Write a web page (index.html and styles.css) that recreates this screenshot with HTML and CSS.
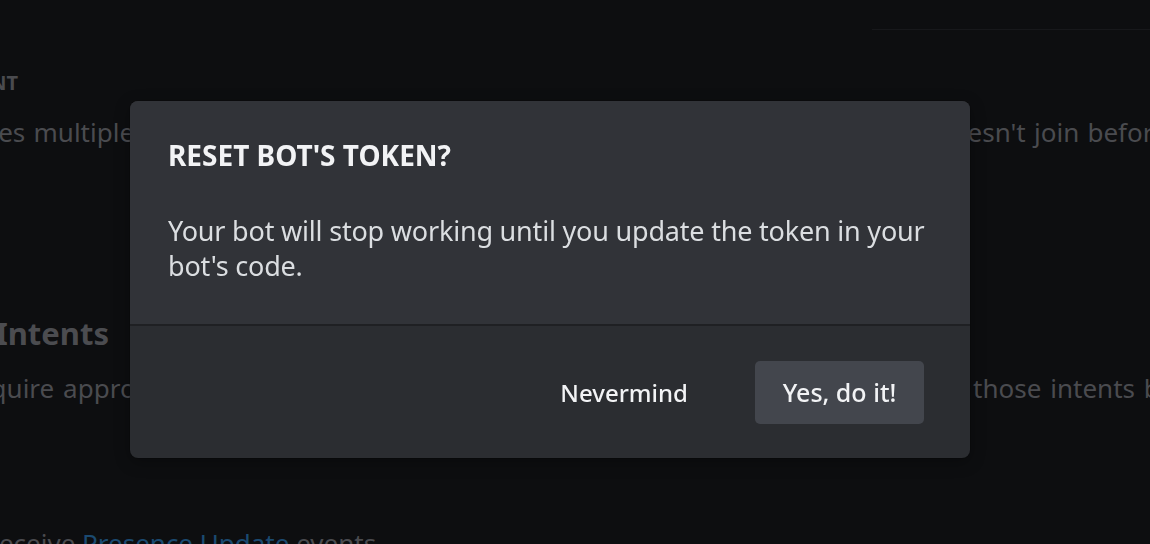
FILE: index.html
```html
<!DOCTYPE html>
<html lang="en">
<head>
<meta charset="utf-8">
<title>Reset Bot's Token</title>
<link rel="stylesheet" href="styles.css">
</head>
<body>
<div class="page">
  <div class="topline"></div>
  <div class="content">
    <div class="anchor label-row"><span class="label">REQUIRES OAUTH2 CODE GRANT</span></div>
    <p class="desc one">If your application requires multiple scopes then you may need the full OAuth2 flow to ensure a bot doesn't join before your application is granted a token.</p>
    <div class="anchor heading-row"><h2 class="heading">Privileged Gateway Intents</h2></div>
    <p class="desc two">Some Gateway Intents require approval if your bot is verified. If your bot is not verified, you can toggle those intents below to access them.</p>
    <p class="desc three">Required for your bot to receive <a class="link">Presence Update</a> events.</p>
  </div>
</div>

<div class="overlay">
  <div class="modal">
    <div class="modal-body">
      <h1 class="modal-title">RESET BOT'S TOKEN?</h1>
      <p class="modal-text">Your bot will stop working until you update the token in your bot's code.</p>
    </div>
    <div class="modal-footer">
      <button class="btn btn-link">Nevermind</button>
      <button class="btn btn-primary">Yes, do it!</button>
    </div>
  </div>
</div>
</body>
</html>
```

FILE: styles.css
```css
* { box-sizing: border-box; }
html, body {
  margin: 0;
  padding: 0;
  width: 1150px;
  height: 544px;
  overflow: hidden;
  background: #0d0e10;
  font-family: "Noto Sans", "Open Sans", sans-serif;
}
.page {
  height: 544px;
  overflow: hidden;
}
.topline {
  height: 1px;
  margin: 29px 0 0 872px;
  background: #17181b;
}
.content {
  display: flex;
  flex-direction: column;
  align-items: flex-start;
  color: #4a4b4f;
}
/* rows whose visible text ends at a fixed point: content overflows to the left */
.anchor {
  display: flex;
  justify-content: flex-end;
  flex-shrink: 0;
}
.anchor > * { flex-shrink: 0; white-space: nowrap; }
.label-row {
  width: 18px;
  margin-top: 41px;
}
.label {
  font-size: 20px;
  font-weight: 700;
  line-height: 24px;
}
.desc {
  margin: 0;
  font-size: 26px;
  line-height: 34px;
  white-space: nowrap;
  flex-shrink: 0;
}
.desc.one {
  margin-top: 20px;
  margin-left: -309px;
  word-spacing: 1.5px;
}
.heading-row {
  width: 109px;
  margin-top: 165px;
}
.heading {
  margin: 0;
  font-size: 31px;
  font-weight: 700;
  line-height: 38px;
  color: #4b4c50;
}
.desc.two {
  margin-top: 19px;
  margin-left: -322px;
  word-spacing: 2.1px;
}
.desc.three {
  margin-top: 121px;
  margin-left: -313px;
}
.link { color: #1b4a71; }

.overlay {
  position: fixed;
  inset: 0;
}
.modal {
  position: absolute;
  left: 130px;
  top: 101px;
  width: 840px;
  height: 357px;
  border-radius: 8px;
  overflow: hidden;
  display: flex;
  flex-direction: column;
  background: #2b2d31;
  box-shadow: 0 0 0 1px rgba(0,0,0,0.15), 0 4px 16px rgba(0,0,0,0.3);
}
.modal-body {
  height: 225px;
  padding: 37px 30px 0 38px;
  background: #313338;
  border-bottom: 2px solid #1f2023;
}
.modal-title {
  margin: 0;
  font-size: 28px;
  font-weight: 700;
  line-height: 35px;
  color: #f2f3f5;
}
.modal-text {
  margin: 40px 0 0 0;
  font-size: 27px;
  line-height: 35px;
  letter-spacing: -0.2px;
  color: #dbdee1;
}
.modal-footer {
  flex: 1;
  display: flex;
  justify-content: flex-end;
  align-items: center;
  gap: 67px;
  padding: 0 46px 0 38px;
}
.btn {
  font-family: inherit;
  font-size: 25px;
  font-weight: 500;
  border: 0;
  padding: 0;
  height: 63px;
  color: #f2f3f5;
  cursor: pointer;
}
.btn-link {
  background: transparent;
  font-size: 24px;
}
.btn-primary {
  background: #43464d;
  width: 169px;
  border-radius: 5px;
}
```
